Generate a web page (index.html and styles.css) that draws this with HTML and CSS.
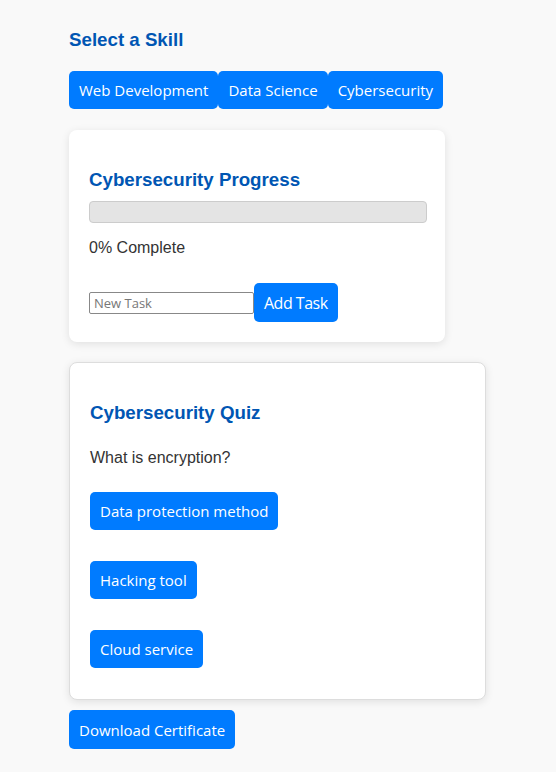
FILE: index.html
```html
<!DOCTYPE html>
<html>
<head>
<meta charset="utf-8">
<link rel="stylesheet" href="styles.css">
</head>
<body>
<main class="page">
  <h2 class="section-title">Select a Skill</h2>
  <div class="skills">
    <button class="btn">Web Development</button><button class="btn">Data Science</button><button class="btn">Cybersecurity</button>
  </div>

  <section class="card progress-card">
    <h3 class="card-title">Cybersecurity Progress</h3>
    <div class="bar"><div class="bar-fill" style="width:0%"></div></div>
    <p class="status">0% Complete</p>
    <div class="task-row">
      <input class="task-input" type="text" placeholder="New Task"><button class="btn btn-lg">Add Task</button>
    </div>
  </section>

  <section class="card quiz-card">
    <h3 class="card-title">Cybersecurity Quiz</h3>
    <p class="question">What is encryption?</p>
    <div class="answers">
      <button class="btn">Data protection method</button>
      <button class="btn">Hacking tool</button>
      <button class="btn">Cloud service</button>
    </div>
  </section>

  <button class="btn download">Download Certificate</button>
</main>
</body>
</html>
```

FILE: styles.css
```css
html, body {
  margin: 0;
  padding: 0;
  background: #f9f9f9;
}
body {
  font-family: "Liberation Sans", Arial, sans-serif;
  color: #333;
}
.page {
  padding: 30px 0 0 69px;
  display: flex;
  flex-direction: column;
  align-items: flex-start;
}
.section-title {
  margin: 0;
  font-size: 18.72px;
  line-height: 20px;
  color: #0056b3;
  font-weight: bold;
}
.skills {
  margin-top: 21px;
  display: flex;
}
.btn {
  font-family: "Open Sans", "Noto Sans", sans-serif;
  font-size: 15px;
  background: #007bff;
  color: #fff;
  border: none;
  border-radius: 5px;
  padding: 0 10px;
  height: 38px;
  line-height: 38px;
  cursor: pointer;
}
.card {
  background: #fff;
  border-radius: 8px;
  box-shadow: 0 2px 8px rgba(0,0,0,0.1);
  padding: 20px;
  box-sizing: border-box;
}
.progress-card {
  margin-top: 21px;
  width: 376px;
  height: 212px;
}
.quiz-card {
  margin-top: 20px;
  width: 417px;
  height: 338px;
  border: 1px solid #ddd;
}
.card-title {
  margin: 20px 0 0;
  font-size: 18.72px;
  line-height: 20px;
  color: #0056b3;
}
.bar {
  margin-top: 11px;
  width: 338px;
  height: 22px;
  box-sizing: border-box;
  background: #e4e4e4;
  border: 1px solid #ccc;
  border-radius: 4px;
  overflow: hidden;
}
.bar-fill { height: 100%; background: #28a745; }
.status {
  margin: 16px 0 0;
  font-size: 16px;
  line-height: 18px;
}
.task-row {
  margin-top: 26px;
  display: flex;
  align-items: center;
}
.task-input {
  width: 165px;
  height: 22px;
  box-sizing: border-box;
  border: 1px solid #888;
  border-radius: 2px;
  font-family: "Open Sans", sans-serif;
  font-size: 13px;
  padding: 0 4px;
  margin: 0;
}
.task-input::placeholder { color: #777; }
.btn-lg {
  font-size: 16px;
  letter-spacing: -0.5px;
  height: 39px;
}
.question {
  margin: 26px 0 0;
  font-size: 16px;
  line-height: 18px;
}
.answers {
  margin-top: 25px;
  display: flex;
  flex-direction: column;
  align-items: flex-start;
  gap: 31px;
}
.download {
  margin-top: 10px;
  height: 39px;
}
```
